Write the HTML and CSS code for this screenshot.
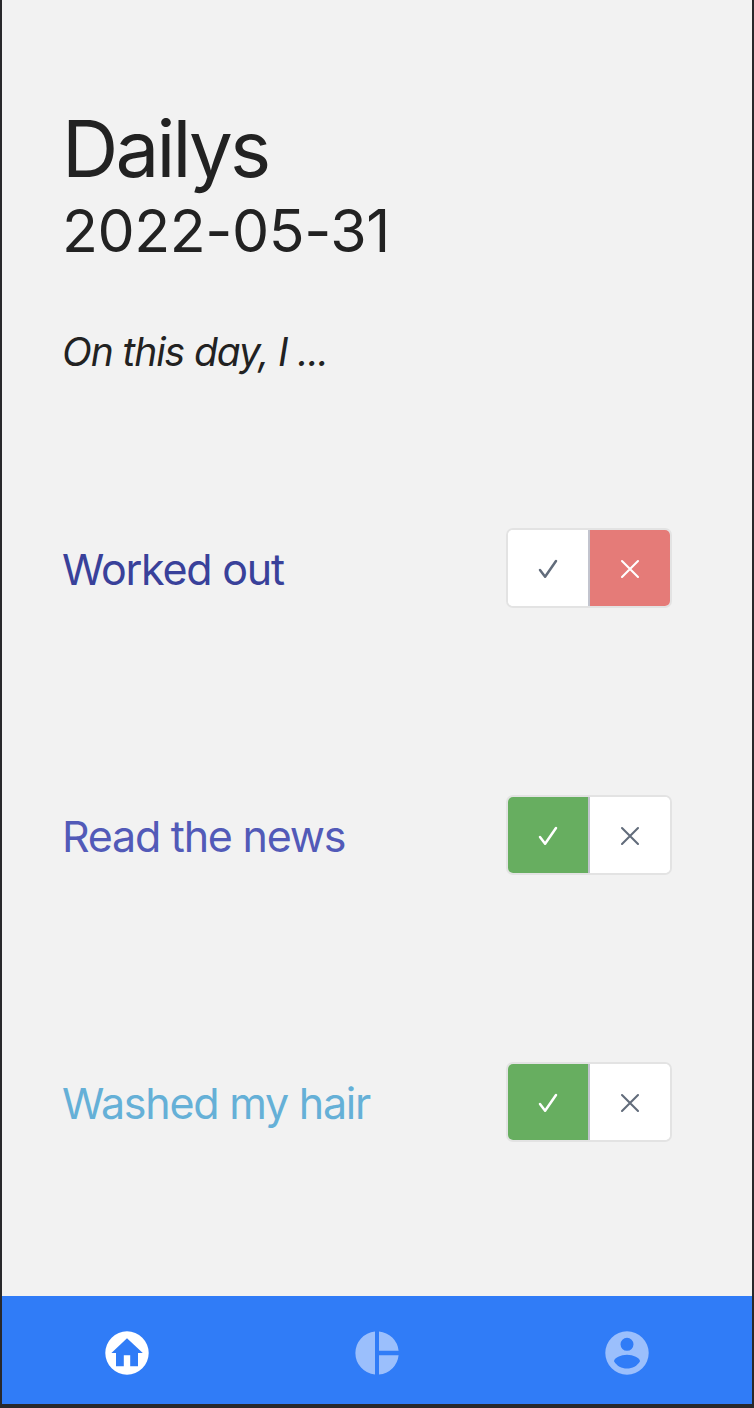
FILE: index.html
```
<!DOCTYPE html>
<html lang="en">
<head>
<meta charset="utf-8">
<title>Dailys</title>
<link rel="stylesheet" href="styles.css">
</head>
<body>
<svg class="sprite" width="0" height="0">
  <symbol id="check" viewBox="0 0 20 20"><path d="M2 11.1 7.1 17.7 18 2" fill="none" stroke="currentColor" stroke-width="2.5" stroke-linecap="round" stroke-linejoin="round"/></symbol>
  <symbol id="cross" viewBox="0 0 20 20"><path d="M2 2 18 18M18 2 2 18" fill="none" stroke="currentColor" stroke-width="2.1" stroke-linecap="round"/></symbol>
</svg>
<div class="screen">
  <main class="content">
    <h1 class="title">Dailys</h1>
    <p class="date">2022-05-31</p>
    <p class="prompt">On this day, I ...</p>
    <ul class="habits">
      <li class="habit">
        <span class="label worked">Worked out</span>
        <div class="toggle">
          <button class="option" aria-label="Yes"><svg class="mark"><use href="#check"/></svg></button>
          <button class="option no" aria-label="No"><svg class="mark"><use href="#cross"/></svg></button>
        </div>
      </li>
      <li class="habit">
        <span class="label read">Read the news</span>
        <div class="toggle">
          <button class="option yes" aria-label="Yes"><svg class="mark"><use href="#check"/></svg></button>
          <button class="option" aria-label="No"><svg class="mark"><use href="#cross"/></svg></button>
        </div>
      </li>
      <li class="habit">
        <span class="label washed">Washed my hair</span>
        <div class="toggle">
          <button class="option yes" aria-label="Yes"><svg class="mark"><use href="#check"/></svg></button>
          <button class="option" aria-label="No"><svg class="mark"><use href="#cross"/></svg></button>
        </div>
      </li>
    </ul>
  </main>
  <nav class="tabs">
    <a class="tab active"><svg class="icon" viewBox="0 0 44 44"><path fill="currentColor" fill-rule="evenodd" d="M22 .3a21.7 21.7 0 1 0 0 43.4 21.7 21.7 0 0 0 0-43.4ZM22 7.200 37.800 22H33v13.300h-7.800V24.200h-6.400v11.100H11V22H6.400Z"/></svg></a>
    <a class="tab"><svg class="icon" viewBox="0 0 44 44"><path fill="currentColor" d="M20 .4v43.2A21.7 21.7 0 0 1 20 .4ZM24 .4A21.7 21.7 0 0 1 43.6 19.8H24ZM24 24.2h19.6A21.7 21.7 0 0 1 24 43.600Z"/></svg></a>
    <a class="tab"><svg class="icon" viewBox="0 0 44 44"><path fill="currentColor" fill-rule="evenodd" d="M22 .3a21.7 21.7 0 1 0 0 43.4 21.7 21.7 0 0 0 0-43.4ZM22 6.8a6.5 6.5 0 1 1 0 13 6.5 6.5 0 0 1 0-13ZM22 23.800C28 23.800 35 26.800 35 30.300 32.200 35 27.500 37.600 22 37.600S11.800 35 9 30.300C9 26.800 16 23.800 22 23.800Z"/></svg></a>
  </nav>
</div>
</body>
</html>
```
FILE: styles.css
```
* { box-sizing: border-box; margin: 0; padding: 0; }
body { font-family: Inter, "Liberation Sans", sans-serif; background: #28282b; color: #222; }
.sprite { display: block; }
.screen { height: 1408px; display: flex; flex-direction: column; background: #f2f2f2; border: solid #28282b; border-width: 0 2px 4px; }
.content { flex: 1; padding: 104px 60px 0; white-space: nowrap; }
.title { font-size: 78px; line-height: 90px; font-weight: 400; letter-spacing: -2.8px; }
.date { font-size: 59px; line-height: 74px; letter-spacing: -0.45px; }
.prompt { margin-top: 54px; font-size: 39px; line-height: 60px; font-style: italic; letter-spacing: -1.1px; }
.habits { list-style: none; margin-top: 53px; display: grid; grid-auto-rows: 266px; gap: 1px; }
.habit { display: flex; align-items: center; justify-content: space-between; padding-right: 20px; }
.label { font-size: 43px; line-height: 54px; padding-top: 1px; letter-spacing: -1.25px; }
.worked { color: #39419a; }
.read { color: #525ab8; }
.washed { color: #65b0d7; }
.toggle { display: flex; width: 166px; height: 80px; border: 2px solid #e3e3e3; border-radius: 7px; overflow: hidden; background: #fff; }
.option { flex: 0 0 80px; display: grid; place-items: center; padding-top: 2px; border: 0; background: #fff; color: #626c7b; }
.option + .option { flex: 0 0 82px; border-left: 2px solid #c2c4ce; }
.option.yes { background: #67ae60; color: #fff; }
.option.no { background: #e57b78; color: #fff; }
.mark { width: 20px; height: 20px; }
.tabs { height: 108px; display: grid; grid-template-columns: repeat(3, 1fr); background: #307cf7; }
.tab { display: grid; justify-items: center; align-items: start; padding-top: 34.5px; color: #9bbffc; }
.tab.active { color: #fff; }
.icon { width: 44px; height: 44px; }
```
